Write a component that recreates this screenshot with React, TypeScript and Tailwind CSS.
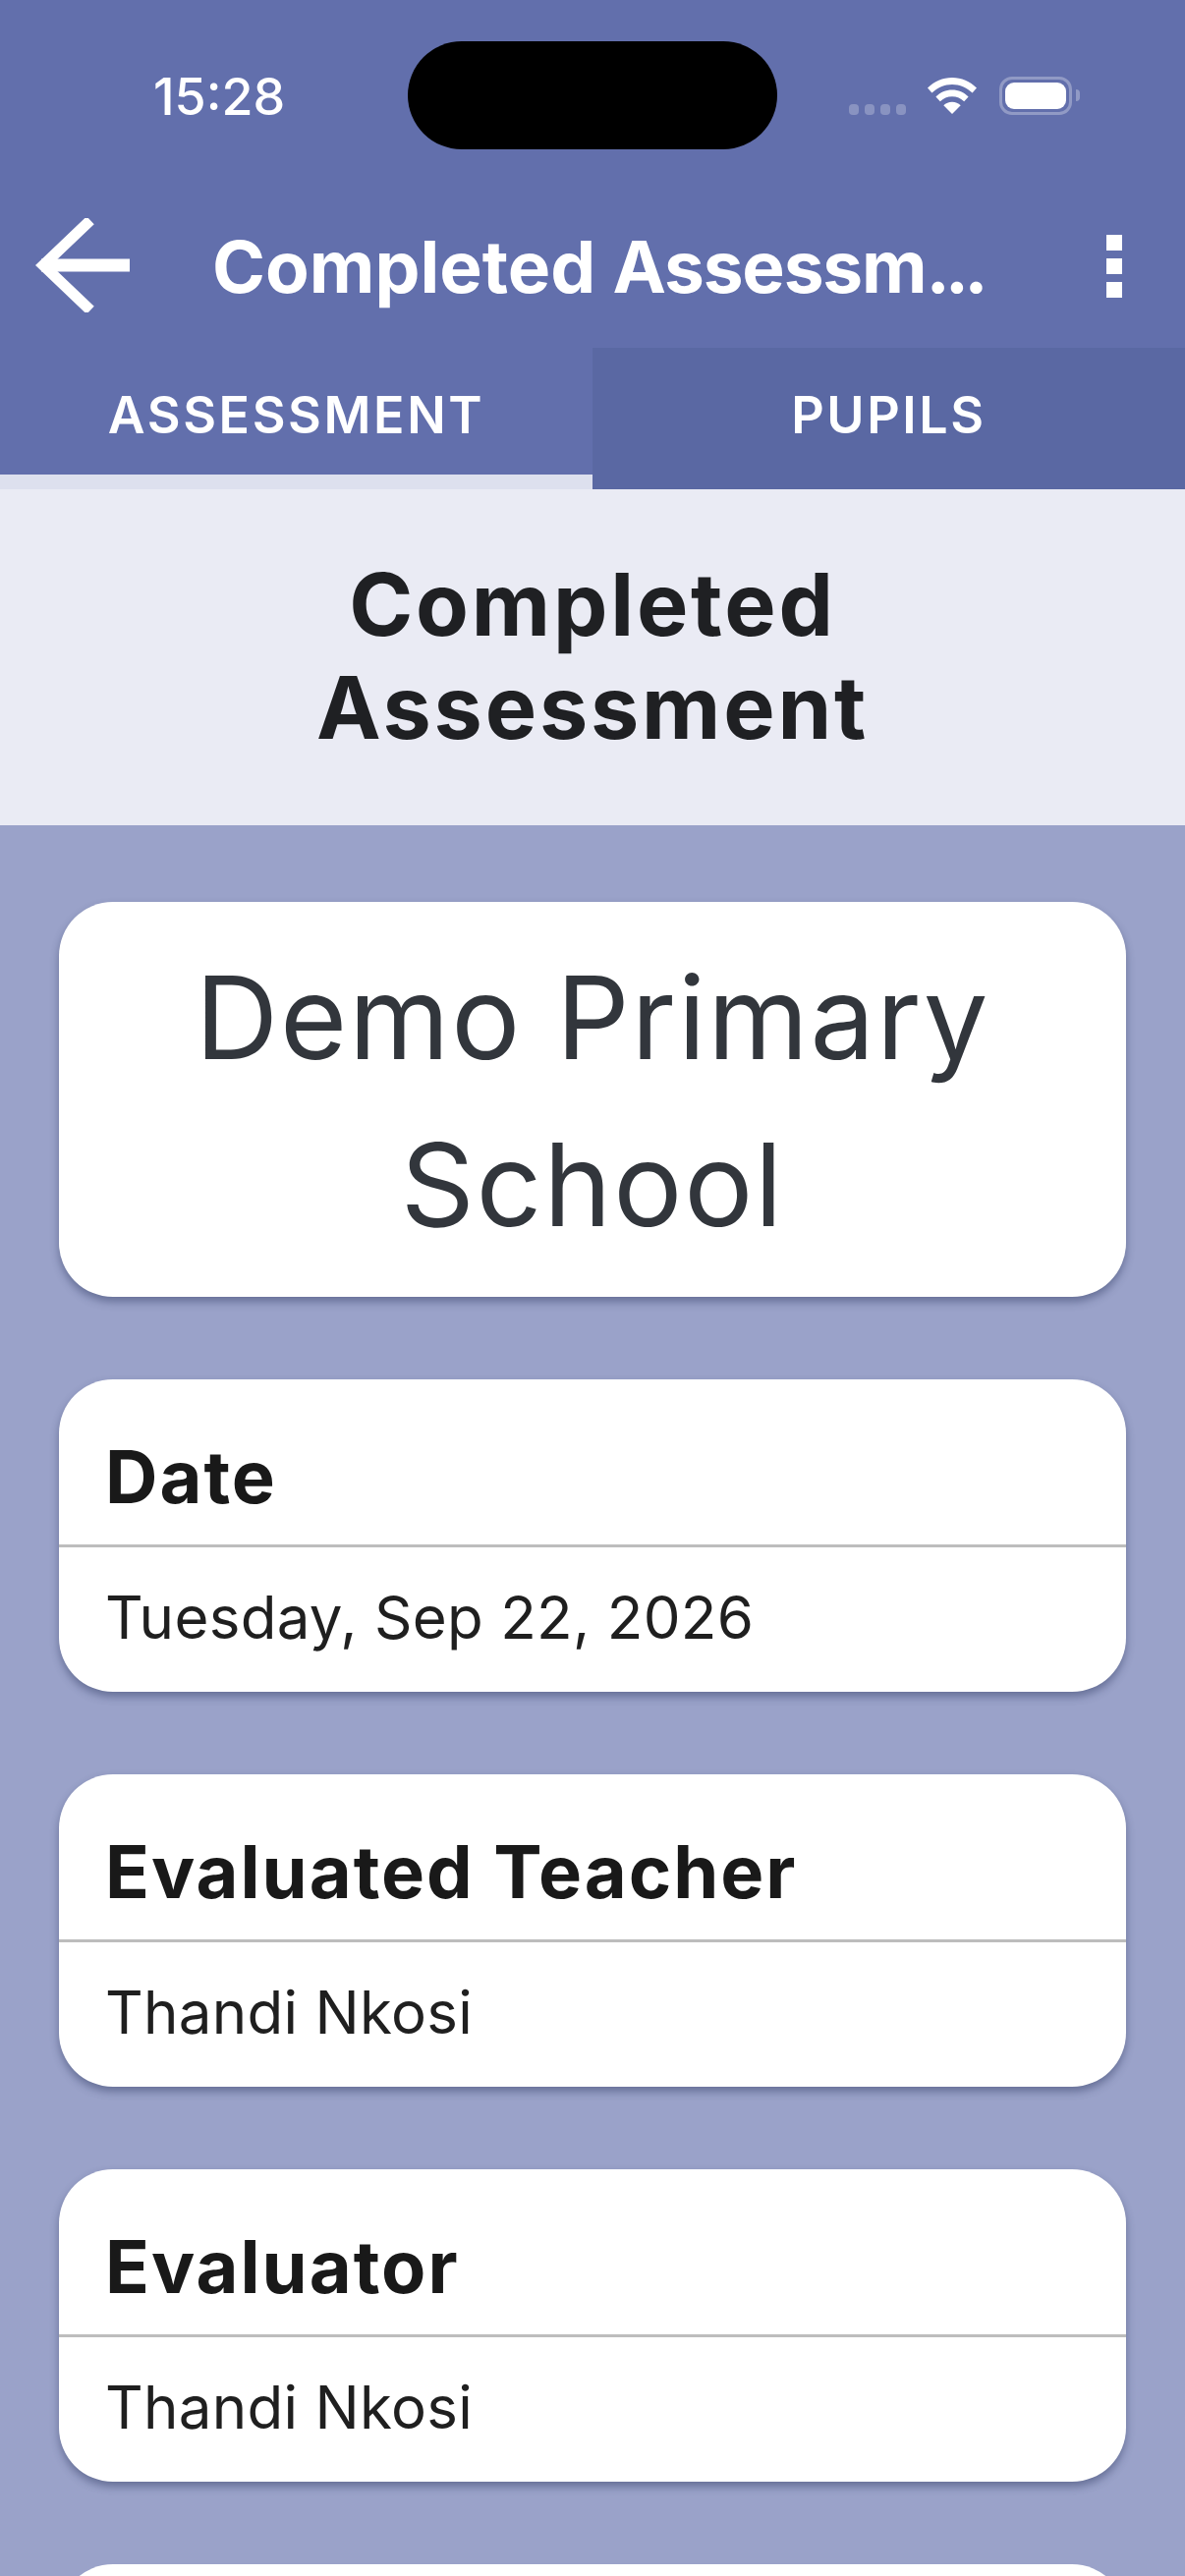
const font = "font-['Inter','Liberation_Sans',sans-serif]";

function BackArrow() {
  return (
    <svg width="96" height="96" viewBox="0 0 96 96" fill="none" stroke="white" strokeLinecap="square">
      <path d="M6 48H96" strokeWidth="13" strokeLinecap="butt" />
      <path d="M52 6L8 48L52 90" strokeWidth="11" />
    </svg>
  );
}

function Wifi() {
  return (
    <svg width="50" height="37" viewBox="0 0 50 37" fill="white">
      <path d="M25 0C34.5 0 43.2 3.8 50 10.6L45.6 15.6C40 10 32.8 6.9 25 6.9S10 10 4.4 15.6L0 10.6C6.8 3.8 15.5 0 25 0Z" />
      <path d="M25 12.4C31.4 12.4 37.2 15 41.6 19.4L37.2 24.3C34 21.1 29.7 19.2 25 19.2S16 21.1 12.8 24.3L8.4 19.4C12.8 15 18.6 12.4 25 12.4Z" />
      <path d="M25 24.8C28.4 24.8 31.4 26.1 33.7 28.2L25 37L16.3 28.2C18.6 26.1 21.6 24.8 25 24.8Z" />
    </svg>
  );
}

function StatusIcons() {
  return (
    <div className="flex items-start pl-[73px] pt-[78px]">
      <div className="flex gap-[6px] mt-[28px]">
        {[0, 1, 2, 3].map(i => (
          <div key={i} className="w-[10px] h-[11px] rounded-[4px] bg-white/25" />
        ))}
      </div>
      <div className="ml-[22px] mt-[1px]">
        <Wifi />
      </div>
      <div className="ml-[23px] w-[74px] h-[39px] rounded-[13px] border-[3px] border-white/30 p-[3px]">
        <div className="w-full h-full rounded-[9px] bg-white" />
      </div>
      <div className="ml-[4px] mt-[13px] w-[4px] h-[12px] rounded-r-full bg-white/30" />
    </div>
  );
}

function Card({ label, value }: { label: string; value: string }) {
  return (
    <div className="h-[318px] rounded-[55px] bg-white shadow-[0_5px_8px_rgba(40,50,90,0.45)] overflow-hidden">
      <div className="h-[171px] border-b-[3px] border-[#bdbdbd] pl-[47px] pt-[55px] text-[74px] leading-[88px] font-bold text-[#191919] tracking-[2px]">
        {label}
      </div>
      <div className="pl-[47px] pt-[35px] text-[60px] leading-[72px] text-[#1f1f1f] tracking-[0.3px]">
        {value}
      </div>
    </div>
  );
}

export default function App() {
  return (
    <div className={`${font} w-[1206px] h-[2622px] overflow-hidden bg-[#9aa2c9]`}>
      <div className="bg-[#626fac] text-white">
        <div className="grid grid-cols-[415px_376px_415px] h-[210px]">
          <div className="pl-[156px] pt-[67px] text-[52px] leading-[63px] font-medium">15:28</div>
          <div className="mt-[42px] h-[110px] rounded-[55px] bg-black" />
          <StatusIcons />
        </div>
        <div className="h-[144px] flex items-start justify-between pl-[36px] pr-[64px]">
          <div className="mt-[12px]">
            <BackArrow />
          </div>
          <div className="ml-[84px] mr-auto text-[73px] leading-[88px] font-bold mt-[18px] whitespace-nowrap">
            Completed <span className="tracking-[-1.2px]">Assessm</span>
            <span className="tracking-[-5px]">...</span>
          </div>
          <div className="mt-[29px] flex flex-col gap-[8px]">
            <div className="w-[16px] h-[16px] bg-white" />
            <div className="w-[16px] h-[16px] bg-white" />
            <div className="w-[16px] h-[16px] bg-white" />
          </div>
        </div>
        <div className="grid grid-cols-2 h-[144px] text-[52px] leading-[63px] font-semibold tracking-[2.6px] text-center">
          <div className="border-b-[15px] border-[#dde0ee] pt-[37px]">ASSESSMENT</div>
          <div className="bg-[#5a68a3] pt-[37px]">PUPILS</div>
        </div>
      </div>
      <div className="h-[342px] bg-[#eaebf4] pt-[65px] text-center text-[88px] leading-[105px] font-bold text-[#1f2023] tracking-[2.8px]">
        Completed
        <br />
        Assessment
      </div>
      <div className="px-[60px] pt-[78px] flex flex-col">
        <div className="h-[402px] rounded-[55px] bg-white shadow-[0_5px_8px_rgba(40,50,90,0.45)] pt-[33px] text-center text-[117px] leading-[170px] text-[#32363c] tracking-[1.8px]">
          Demo Primary
          <br />
          School
        </div>
        <div className="mt-[84px] flex flex-col gap-[84px]">
          <Card label="Date" value="Tuesday, Sep 22, 2026" />
          <Card label="Evaluated Teacher" value="Thandi Nkosi" />
          <Card label="Evaluator" value="Thandi Nkosi" />
          <div className="h-[318px] rounded-[55px] bg-white" />
        </div>
      </div>
    </div>
  );
}
